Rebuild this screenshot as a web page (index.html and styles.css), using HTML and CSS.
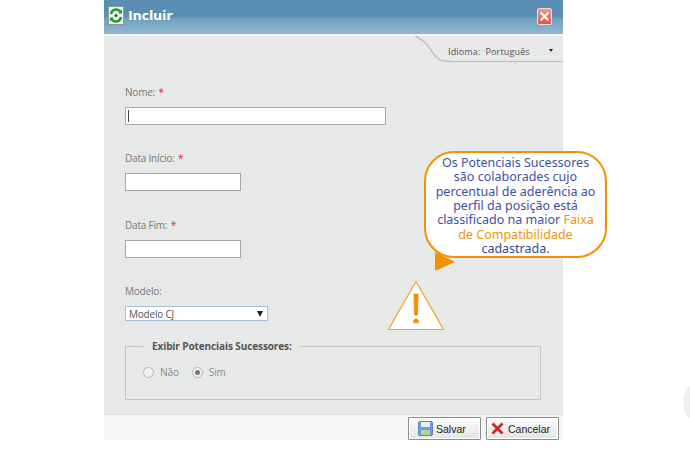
FILE: index.html
```html
<!DOCTYPE html>
<html lang="pt">
<head>
<meta charset="utf-8">
<title>Incluir</title>
<link rel="stylesheet" href="styles.css">
</head>
<body>
<div class="dialog">
  <header class="titlebar">
    <div class="title">
      <svg class="app-icon" width="16" height="19" viewBox="0 0 16 19"><rect x="0.5" y="0.5" width="15" height="18" fill="#eef2ee" stroke="#8a9a92"/><path d="M3 8a5.2 5.2 0 0 1 9.5-2.2" fill="none" stroke="#1c9a32" stroke-width="2.4"/><path d="M13 11a5.2 5.2 0 0 1-9.5 2.2" fill="none" stroke="#1c9a32" stroke-width="2.4"/><path d="M14 3.5v4h-4zM2 15.5v-4h4z" fill="#1c9a32"/><circle cx="8" cy="9.5" r="1.6" fill="#1c6a2a"/></svg>
      <span>Incluir</span>
    </div>
    <button class="close" type="button" aria-label="Fechar">
      <svg width="15" height="15" viewBox="0 0 15 15"><path d="M3 3l9 9M12 3l-9 9" stroke="#fff" stroke-width="2.4"/></svg>
    </button>
  </header>
  <div class="langbar">
    <svg class="tab-curve" width="36" height="26" viewBox="0 0 36 26"><path d="M0 0c6 2 9 5 14 11 5 7 8 14 16 14h6" fill="none" stroke="#b9bcbc" stroke-width="1.2"/></svg>
    <div class="lang">
      <span class="lang-label">Idioma:</span>
      <span>Português</span>
      <span class="lang-arrow"></span>
    </div>
  </div>
  <form class="form">
    <div class="field field-name">
      <label>Nome: <em>*</em></label>
      <div class="input input-wide"><span class="caret"></span></div>
    </div>
    <div class="field field-start">
      <label>Data Início: <em>*</em></label>
      <div class="input input-short"></div>
    </div>
    <div class="field field-end">
      <label>Data Fim: <em>*</em></label>
      <div class="input input-short"></div>
    </div>
    <div class="field field-model">
      <label>Modelo:</label>
      <div class="select"><span>Modelo CJ</span><span class="select-arrow"></span></div>
    </div>
    <fieldset class="group">
      <legend>Exibir Potenciais Sucessores:</legend>
      <div class="radios">
        <span class="radio"></span><span class="radio-text">Não</span>
        <span class="radio checked"></span><span class="radio-text">Sim</span>
      </div>
    </fieldset>
  </form>
  <footer class="footer">
    <button class="btn" type="button">
      <svg width="15" height="15" viewBox="0 0 15 15"><rect x="0.5" y="0.5" width="14" height="14" rx="1.5" fill="#6f9bd8" stroke="#5a84c0"/><rect x="3" y="1" width="9" height="5" fill="#eaf0fa"/><rect x="3" y="9" width="9" height="5" fill="#b5d29a"/></svg>
      <span>Salvar</span>
    </button>
    <button class="btn" type="button">
      <svg width="13" height="13" viewBox="0 0 13 13"><path d="M1.5 1.5l10 10M11.5 1.5l-10 10" stroke="#d0281f" stroke-width="2.8"/></svg>
      <span>Cancelar</span>
    </button>
  </footer>
</div>

<div class="callout">
  Os Potenciais Sucessores<br>são colaborades cujo<br>percentual de aderência ao<br>perfil da posição está<br>classificado na maior <b>Faixa<br>de Compatibilidade</b><br><i>cadastrada.</i>
</div>
<svg class="callout-tail" width="22" height="20" viewBox="0 0 22 20"><path d="M1 1l20 10L2 19.5a1 1 0 0 1-1-1z" fill="#f39200"/></svg>
<svg class="warning" width="58" height="52" viewBox="0 0 58 52"><path d="M29 1.5L1.5 49.5h55z" fill="#fff" stroke="#f6a623" stroke-width="1.2"/><path d="M27 14h4l-.6 21h-2.8z" fill="#f39200" stroke="#f39200" stroke-linejoin="round"/><ellipse cx="29" cy="41" rx="2.8" ry="2.2" fill="#f39200"/></svg>
<div class="edge-mark"></div>
</body>
</html>
```
FILE: styles.css
```css
* { box-sizing: border-box; }
html, body { margin: 0; padding: 0; background: #fff; }
body { width: 690px; height: 458px; overflow: hidden; position: relative; font-family: "Open Sans", sans-serif; }

.dialog { width: 459px; height: 440px; margin-left: 104px; display: flex; flex-direction: column; background: #e7e8e8; }

.titlebar { height: 36px; flex: none; display: flex; align-items: flex-start; justify-content: space-between; padding: 6px 11px 0 4px; border-bottom: 2px solid #f4f6f6; background: linear-gradient(#5a8fb3 0, #5a8fb3 17px, #6f9fbe 18px, #93b8cf 34px); }
.title { display: flex; align-items: center; gap: 4px; color: #fff; font: bold 13px "DejaVu Sans", sans-serif; letter-spacing: -.3px; text-shadow: 0 0 1px #4b7a9a; }
.close { width: 15px; height: 17px; padding: 0; margin-top: 2px; border: 1px solid #f0d8d4; border-radius: 2px; background: linear-gradient(#e99a8c, #d8574a); display: flex; align-items: center; justify-content: center; }

.langbar { height: 26px; flex: none; display: flex; justify-content: flex-end; position: relative; }
.tab-curve { position: absolute; left: 311px; top: 0; }
.lang { width: 118px; height: 26px; padding: 0 0 3px 3px; display: flex; align-items: flex-end; gap: 5px; font: 9px "Open Sans", sans-serif; color: #555; border-bottom: 1px solid #b9bcbc; letter-spacing: .15px; }
.lang-arrow { width: 0; height: 0; margin: 0 0 6px 14px; border: 2.5px solid transparent; border-top: 3px solid #222; border-bottom: 0; }

.form { flex: 1; min-height: 0; padding: 0 22px 0 21px; display: flex; flex-direction: column; }
.field { display: flex; flex-direction: column; gap: 9px; flex: none; }
.field label { font: 10px/12px "Open Sans", sans-serif; color: #777; letter-spacing: -.2px; }
.field em { color: #e0243a; font-style: normal; margin-left: 1px; }
.field-name { margin-top: 24px; }
.field-start { margin-top: 27px; }
.field-end { margin-top: 28px; }
.field-model { margin-top: 27px; }

.input { height: 18px; background: #fff; border: 1.5px solid #a3a6a6; display: flex; align-items: center; }
.input-wide { width: 261px; }
.input-short { width: 116px; }
.caret { width: 1px; height: 12px; margin-left: 2px; background: #444; }

.select { width: 143px; height: 15px; background: #fff; border: 1px solid #a5bfd6; display: flex; align-items: center; justify-content: space-between; padding: 0 4px 0 3px; font: 10px "Open Sans", sans-serif; color: #555; letter-spacing: -.2px; }
.select-arrow { width: 0; height: 0; border: 3px solid transparent; border-top: 6px solid #222; border-bottom: 0; }

.group { flex: none; width: 416px; height: 61px; margin: 18px 0 0; padding: 9px 17px 0; border: 1px solid #c3c6c6; }
.group legend { margin-left: 0; padding: 0 8px 0 9px; font: bold 10px "Open Sans", sans-serif; color: #555; letter-spacing: -.1px; }
.radios { display: flex; align-items: center; font: 10px "Open Sans", sans-serif; color: #888; letter-spacing: -.1px; padding-top: 3px; }
.radio { width: 11px; height: 11px; border-radius: 50%; border: 1px solid #b5b7b7; background: #f0f0f0; display: flex; align-items: center; justify-content: center; }
.radio.checked::after { content: ""; width: 5px; height: 5px; border-radius: 50%; background: #777; }
.radio-text { margin: 0 13px 0 6px; }

.footer { height: 26px; flex: none; background: #f6f6f6; border-top: 1px solid #dfe1e1; display: flex; justify-content: flex-end; gap: 5px; padding: 2px 4px 0 0; }
.btn { width: 73px; height: 23px; padding: 0 0 0 9px; display: flex; align-items: center; gap: 3px; border: 1px solid #8b8e8e; border-radius: 1px; background: linear-gradient(#fdfdfd, #e4e4e4); font: 10.5px "Liberation Sans", sans-serif; color: #222; box-shadow: inset 0 0 0 1px #fff; }
.btn + .btn { padding-left: 4px; gap: 4px; }

.callout { position: absolute; left: 424px; top: 151px; width: 183px; height: 107px; padding-top: 3px; background: #fff; border: 2px solid #f39200; border-radius: 30px; font: 12.5px/14.35px "Noto Sans", sans-serif; color: #3c51a3; text-align: center; z-index: 2; }
.callout b { font-weight: normal; color: #f39200; }
.callout i { font-style: normal; color: #34498f; }
.callout-tail { position: absolute; left: 434px; top: 251px; z-index: 1; }
.warning { position: absolute; left: 387px; top: 280px; }
.edge-mark { position: absolute; left: 683px; top: 386px; width: 16px; height: 32px; border-radius: 50%; background: #f0f0f0; }
```
